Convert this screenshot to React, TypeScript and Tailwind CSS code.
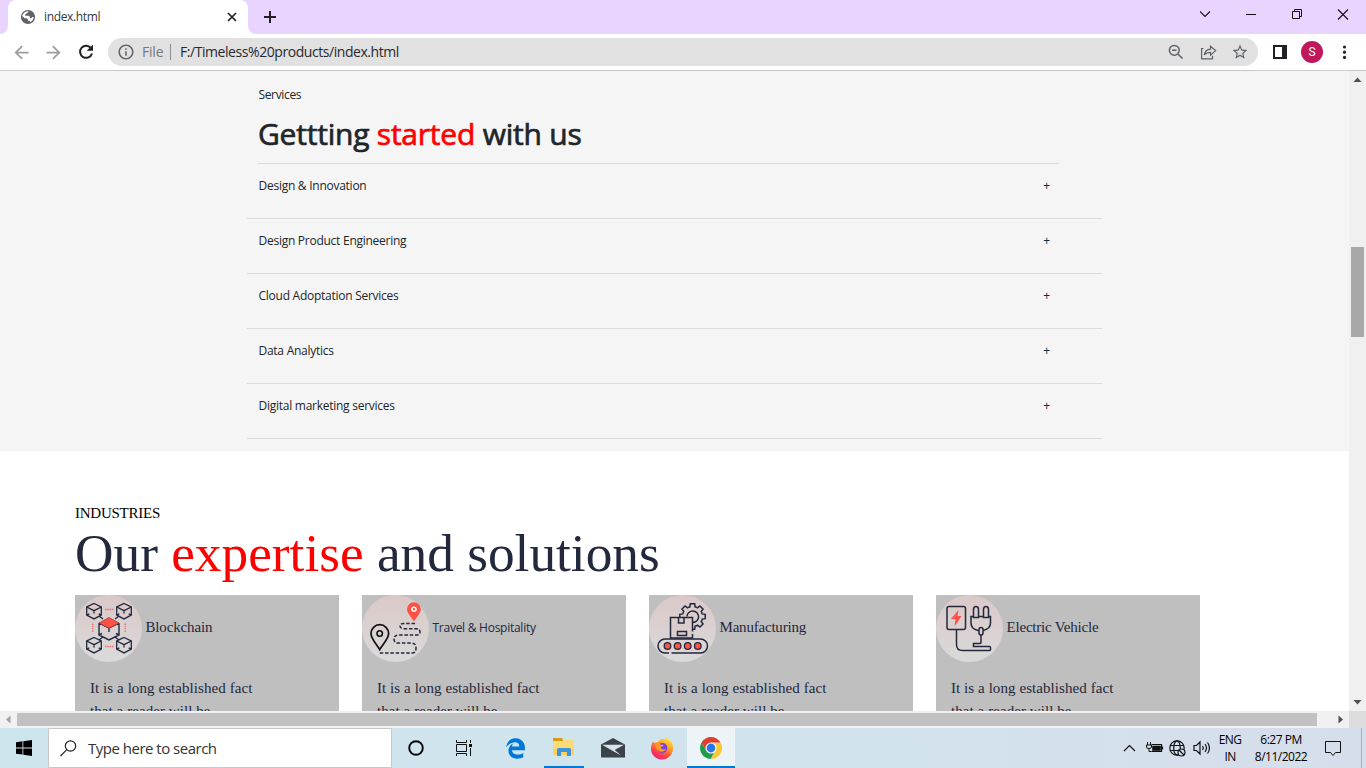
import React from "react";
import { MdArrowBack, MdArrowForward, MdInfoOutline, MdStarBorder } from "react-icons/md";
import { FaEdgeLegacy } from "react-icons/fa6";

const INK = "#23283d";
const RED = "#ff5144";

function TabStrip() {
  return (
    <div className="flex h-[34px] items-stretch bg-[#e9d3ff]">
      <div className="flex w-2 items-end bg-white">
        <div className="h-full w-full rounded-br-lg bg-[#e9d3ff]" />
      </div>
      <div className="bg-[#e9d3ff]">
        <div className="flex h-[34px] w-[240px] items-center rounded-t-lg bg-white pr-[8px] pl-[12px]">
          <svg width="16" height="16" viewBox="0 0 16 16">
            <circle cx="8" cy="8" r="7.1" fill="#5f6368" />
            <path d="M8.500 2.300C8.700 3.200 8.200 3.700 7.300 3.800 6.600 3.900 6.700 4.900 6 5.100 5.200 5.300 5 6 5.300 6.700H8.500c.7 0 1.200.5 1.200 1.200 0 .8.500 1.300 1.200 1.300.8 0 1.300-.5 1.300-1.200h1.600c-.2 2-1.300 3.900-3.100 5-.3-.7-.9-1-1.700-1-.9 0-1.300-.6-1.300-1.400 0-.8-.6-1.300-1.300-1.300H4.600L2.300 7C2.700 4.400 5.200 2.100 8.500 2.300z" fill="#fff" />
          </svg>
          <span className="ml-2 w-[177px] text-[12px] tracking-[-0.35px] text-[#35363a]">index.html</span>
          <svg className="ml-[3px]" width="16" height="16" viewBox="0 0 16 16" stroke="#202124" strokeWidth="1.7">
            <path d="M4 4l8 8M12 4l-8 8" />
          </svg>
        </div>
      </div>
      <div className="flex w-2 bg-white">
        <div className="h-full w-full rounded-bl-lg bg-[#e9d3ff]" />
      </div>
      <svg className="mt-[9px] ml-[6px]" width="16" height="16" viewBox="0 0 16 16" stroke="#202124" strokeWidth="2">
        <path d="M8 2v12M2 8h12" />
      </svg>
      <div className="ml-auto flex">
        <svg width="166" height="34" viewBox="0 0 166 34" fill="none" stroke="#111">
          <path d="M0 11.500l5 5 5-5" strokeWidth="1.1" />
          <path d="M46 14.500h10" />
          <path d="M92.500 11.500h7v7h-7zM94.500 11.500v-2h7v7h-2" />
          <path d="M138 9.500l10 10M148 9.500l-10 10" strokeWidth="1.1" />
        </svg>
      </div>
    </div>
  );
}

function Toolbar() {
  return (
    <div className="flex h-[37px] items-center border-b border-[#c9c9cb] bg-white pl-[11px]">
      <MdArrowBack size={21} color="#9b9da0" />
      <MdArrowForward size={21} color="#9b9da0" className="ml-[11px]" />
      <svg className="ml-[11px]" width="22" height="22" viewBox="0 0 22 22">
        <path d="M16.200 7.300A6.100 6.100 0 1 0 17 12.500" fill="none" stroke="#202124" strokeWidth="2" />
        <path d="M18 3.500V9.800H11.700z" fill="#202124" />
      </svg>
      <div className="ml-[11px] flex h-7 w-[1150px] items-center rounded-full bg-[#e1e1e1] pr-[9px] pl-[9px]">
        <MdInfoOutline size={18} color="#5f6368" />
        <span className="ml-[7px] w-[21px] text-[14px] leading-[20px] tracking-[-0.2px] text-[#75787c]">File</span>
        <span className="ml-[7px] h-4 w-px bg-[#8b8d90]" />
        <span className="ml-[9px] text-[14px] leading-[20px] tracking-[-0.44px] text-[#28292c]">F:/Timeless%20products/index.html</span>
        <svg className="ml-auto" width="18" height="18" viewBox="0 0 18 18" fill="none" stroke="#5f6368" strokeWidth="1.500">
          <circle cx="7.300" cy="7.300" r="4.900" /><path d="M11 11l4.500 4.500M5 7.300h4.600" />
        </svg>
        <svg className="ml-[15px]" width="18" height="18" viewBox="0 0 18 18" fill="none" stroke="#5f6368" strokeWidth="1.2">
          <path d="M3.500 5.500h-1.900v10.300h10.900v-3" />
          <path d="M4.300 12c.5-3.700 2.500-5.600 6.200-5.900V3.200l5.100 4.400-5.100 4.500V9.300c-2.900 0-4.800.8-6.200 2.700z" />
        </svg>
        <MdStarBorder size={18} color="#5f6368" className="ml-[13px]" />
      </div>
      <svg className="ml-[15px]" width="14" height="14" viewBox="0 0 14 14">
        <path d="M1 1h12v12H1z" fill="#fff" stroke="#202124" strokeWidth="2" />
        <path d="M9 0h5v14H9z" fill="#202124" />
      </svg>
      <div className="ml-[14px] flex size-[22px] items-center justify-center rounded-full bg-[#c2185b] font-['Roboto',sans-serif] text-[12px] text-white">S</div>
      <svg className="ml-[19px]" width="5" height="16" viewBox="0 0 5 16" fill="#202124">
        <circle cx="2.500" cy="3" r="1.600" /><circle cx="2.500" cy="8.200" r="1.600" /><circle cx="2.500" cy="13.400" r="1.600" />
      </svg>
    </div>
  );
}

const services = [
  "Design & Innovation",
  "Design Product Engineering",
  "Cloud Adoptation Services",
  "Data Analytics",
  "Digital marketing services",
];

function Services() {
  return (
    <section className="h-[380px] shrink-0 bg-[#f5f5f5] pt-[14px] pl-[247px] text-[#212529]">
      <div className="pl-[11px]">
        <p className="h-5 pl-[0.5px] text-[12px] leading-5 tracking-[-0.35px]">Services</p>
        <h2 className="mt-[10px] h-[38px] text-[30px] leading-[38px] font-normal tracking-[-0.22px] whitespace-nowrap [-webkit-text-stroke:0.7px]">
          Gettting <span className="text-[#ff0000]">started</span> with us
        </h2>
        <div className="mt-[10px] h-px w-[801px] bg-[#dbdbdb]" />
      </div>
      {services.map((name) => (
        <div key={name} className="flex h-[55px] w-[855px] justify-between border-b border-[#dbdbdb] pt-3 pr-[52px] pl-[11.500px] leading-5">
          <span className="text-[12px] tracking-[-0.26px]">{name}</span>
          <span className="text-[12px] text-[#0b2f4a]">+</span>
        </div>
      ))}
    </section>
  );
}

function Cube({ x, y }: { x: number; y: number }) {
  return (
    <g transform={`translate(${x} ${y})`} fill="none" stroke={INK} strokeWidth="1.3">
      <path d="M0-7.500L7.300-4V4.200L0 7.900-7.300 4.200V-4zM-7.300-4L0-.3 7.300-4M0-.3V2.500M-7.300 4.200l2.600-1.300M7.300 4.200L4.700 2.900" />
    </g>
  );
}

function BlockchainIcon() {
  return (
    <svg width="67" height="67" viewBox="0 0 67 67">
      <path d="M24 21l4 3M44 21l-4 3M24 45l4-3M44 45l-4-3" stroke={INK} strokeWidth="1.3" />
      <Cube x={19} y={16} /><Cube x={49} y={16} /><Cube x={19} y={50} /><Cube x={49} y={50} />
      <path d="M24 28v12l10 5 10-5V28M24 28l10 5 10-5M34 33v4M24 40l3-1.500M44 40l-3-1.500" fill="none" stroke={INK} strokeWidth="1.400" />
      <path d="M34 22.500L44 28l-10 5.200L24 28z" fill={RED} stroke="#a33b40" strokeWidth=".8" />
      <path d="M30 14.500h9M30 51.500h9M17.700 28.500v9M50.200 28.500v9" stroke={RED} strokeWidth="1.300" strokeDasharray="1.500 .8" opacity=".75" />
    </svg>
  );
}

function TravelIcon() {
  return (
    <svg width="67" height="67" viewBox="0 0 67 67" fill="none">
      <path d="M52 26.500c-2.300-3.700-7-8.700-7-12.300a6.900 6.900 0 0 1 13.800 0c0 3.600-4.500 8.600-6.800 12.300z" fill={RED} />
      <circle cx="52" cy="14.300" r="2" stroke="#fff" strokeWidth="1.500" />
      <path d="M17.700 54.500c-3-5.300-8.700-10.500-8.700-16a8.800 8.800 0 0 1 17.600 0c0 5.500-6 10.700-8.900 16z" stroke="#111" strokeWidth="1.700" />
      <circle cx="17.700" cy="38.500" r="2.700" stroke="#111" strokeWidth="1.600" />
      <path d="M53 28.500H42q-4 0-4 2.600t4 2.600h12q4 0 4 3.200t-4 3.200H36q-4 0-4 4t4 4h14q4 0 4 5t-4 4.800H16" stroke={INK} strokeWidth="1.500" strokeDasharray="3.500 1.800" />
    </svg>
  );
}

const gearTeeth = [0, 45, 90, 135, 180, 225, 270, 315];

function ManufacturingIcon() {
  return (
    <svg width="67" height="67" viewBox="0 0 67 67" fill="none" stroke={INK} strokeWidth="1.500">
      <g transform="translate(43.500 21.500)">
        {gearTeeth.map((a) => (
          <path key={a} d="M-4-9.300L-2.600-9.700-2.200-12.700H2.200L2.600-9.700 4-9.300" transform={`rotate(${a})`} />
        ))}
        <path d="M-5.500 0a5.800 5.800 0 1 1 5.800 6" />
      </g>
      <path d="M21.500 43V22.500h22V43z" fill="#dccdcd" />
      <path d="M29.500 22.500v5.500h5.500v-5.500M28.500 36.500h9v4h-9z" />
      <rect x="9" y="44" width="49.500" height="14" rx="7" fill="#dbd5d5" />
      <path d="M43.500 36.500v2.500" stroke="#dbd0d0" strokeWidth="2.500" />
      <path d="M20 58h2.500" stroke="#dbd8d8" strokeWidth="2" />
      <g fill={RED} strokeWidth="1.300">
        <circle cx="18.500" cy="51" r="3.300" /><circle cx="28.600" cy="51" r="3.300" /><circle cx="38.700" cy="51" r="3.300" /><circle cx="48.800" cy="51" r="3.300" />
      </g>
    </svg>
  );
}

function VehicleIcon() {
  return (
    <svg width="67" height="67" viewBox="0 0 67 67" fill="none" stroke={INK} strokeWidth="1.500">
      <rect x="11" y="11.500" width="18.500" height="23" rx="2" />
      <path d="M22.500 15l-7.500 9h4.500l-1 7.500 7-10.500h-4z" fill={RED} stroke="none" />
      <path d="M20.500 35v14.500q0 6 6 6h27q1 0 1-1v-2q0-1-1-1H37.500v-3h6.500q1 0 1-1V40" />
      <path d="M37.500 21.500h-2.500v6.500q0 6 7 7.500h5q7.500-1.500 7.500-7.500v-6.500h-2.500M37.500 22.500v-8q0-3 2.500-3t2.500 3v8zM47.500 22.500v-8q0-3 2.500-3t2.500 3v8zM42.500 21.500h5" />
      <rect x="43" y="32.500" width="4" height="7.500" rx="2" fill="#dbd1d1" />
    </svg>
  );
}

const cards = [
  { title: "Blockchain", Icon: BlockchainIcon, cls: "text-[15px] tracking-[-0.15px]" },
  { title: "Travel & Hospitality", Icon: TravelIcon, cls: "font-['Open_Sans',sans-serif] text-[12px] tracking-[-0.26px]" },
  { title: "Manufacturing", Icon: ManufacturingIcon, cls: "text-[15px] tracking-[-0.2px]" },
  { title: "Electric Vehicle", Icon: VehicleIcon, cls: "text-[15px] tracking-[-0.2px]" },
];

function Industries() {
  return (
    <section className="flex-1 bg-white pt-[52px] pl-[75px] font-['Liberation_Serif',serif] text-[#23283d]">
      <p className="h-5 text-[15px] leading-5 tracking-[-0.25px] text-black">INDUSTRIES</p>
      <h2 className="h-[72px] text-[53.300px] leading-[61px] whitespace-nowrap">
        Our <span className="text-[#ff0000]">expertise</span> and solutions
      </h2>
      <div className="flex gap-[23px]">
        {cards.map(({ title, Icon, cls }) => (
          <article key={title} className="h-[180px] w-[264px] shrink-0 bg-[#bfbfbf]">
            <div className="flex h-[67px] items-center">
              <div className="size-[67px] rounded-full bg-linear-to-b from-[#dbc8c8] to-[#dadada]">
                <Icon />
              </div>
              <h3 className={`ml-[3.500px] pb-[2px] ${cls}`}>{title}</h3>
            </div>
            <p className="mt-[15px] ml-[15px] text-[15px] leading-[23px] tracking-[0.07px] whitespace-nowrap">
              It is a long established fact<br />that a reader will be
            </p>
          </article>
        ))}
      </div>
    </section>
  );
}

function VerticalScrollbar() {
  return (
    <div className="flex h-[640px] w-[17px] flex-col items-center bg-[#f0f0f0]">
      <svg width="17" height="17"><path d="M4.500 11l4-4.500 4 4.500z" fill="#505050" /></svg>
      <div className="mt-[159px] mb-auto h-[90px] w-[13px] bg-[#a8a8a8]" />
      <svg width="17" height="17"><path d="M4.500 6l4 4.500 4-4.500z" fill="#505050" /></svg>
    </div>
  );
}

function HorizontalScrollbar() {
  return (
    <div className="flex h-[17px] items-center bg-[#f1f1f1]">
      <svg width="17" height="17"><path d="M10.500 4.500l-4.500 4 4.500 4z" fill="#a3a3a3" /></svg>
      <div className="h-[13px] w-[1300px] bg-[#c1c1c1]" />
      <svg className="ml-[15px]" width="17" height="17"><path d="M6.500 4.500l4.500 4-4.500 4z" fill="#505050" /></svg>
      <div className="h-full flex-1 bg-[#dcdcdc]" />
    </div>
  );
}

function FolderIcon() {
  return (
    <svg width="22" height="20" viewBox="0 0 22 20">
      <path d="M0 1h9l1 2v1H0z" fill="#d69b16" />
      <path d="M0 4h9.500L11 2.500H21V18H0z" fill="#ffdb78" />
      <path d="M0 12h21v6H0z" fill="#ffd05c" />
      <path d="M4 19v-6.500q0-1.500 1.500-1.500h11q1.500 0 1.500 1.500V19h-4v-4H8v4z" fill="#3a96e0" />
    </svg>
  );
}

function MailIcon() {
  return (
    <svg width="24" height="20" viewBox="0 0 24 20">
      <path d="M0 6.500L12 0l12 6.500V19.500H0z" fill="#3b4349" />
      <path d="M1 6.800h22l-9.300 5.200 6.300 5.500-9-5z" fill="#d3e4ec" />
    </svg>
  );
}

function FirefoxIcon() {
  return (
    <svg width="24" height="24" viewBox="0 0 24 24">
      <defs>
        <linearGradient id="fox" x1=".8" y1="0" x2=".25" y2="1">
          <stop offset="0" stopColor="#fff04a" /><stop offset=".4" stopColor="#ff9b22" /><stop offset=".75" stopColor="#ff3d4b" /><stop offset="1" stopColor="#e81e87" />
        </linearGradient>
      </defs>
      <path d="M3 5.500l1.700 1.700c1-.9 2.200-1.300 3.300-1.200C9 4.500 10.500 3.300 12 3c2-.2 3.300.3 4.300 1.400C15.700 3 15 2 15.500.5c2 1.500 3.400 3.500 4.200 5l.8-1.200c1.800 2.400 2.800 5.300 2.500 8.700C22.500 19 17.800 23.500 12 23.500S1 19 1 13C1 10 1.700 7.500 3 5.500z" fill="url(#fox)" />
      <circle cx="12.300" cy="12" r="5" fill="#7542e5" />
      <path d="M6 7.500c2-.5 3.500 0 4.500 1.300h3.300c-.2 1.500-2.300 2-3 2.500.5 2.500 3.200 2.700 5.500 1.500-1.500 3.500-6.500 4.300-9.300.7C5.300 11.500 5.500 9.500 6 7.500z" fill="#ff9629" />
    </svg>
  );
}

function ChromeIcon() {
  return (
    <svg width="22" height="22" viewBox="0 0 22 22">
      <path d="M11 5.500h9.500A11 11 0 0 1 10.500 22l5.200-8.500z" fill="#fcc934" />
      <path d="M1.500 5.500A11 11 0 0 0 10.500 22l4.800-8.500L6.300 13.700z" fill="#229c4b" />
      <path d="M1.500 5.500A11 11 0 0 1 20.500 5.500H11L6.300 13.700z" fill="#e33b2e" />
      <circle cx="11" cy="11" r="5.500" fill="#fff" /><circle cx="11" cy="11" r="4.400" fill="#2877e8" />
    </svg>
  );
}

function Taskbar() {
  return (
    <div className="flex h-10 bg-linear-to-r from-[#cde5ed] via-[#d1e4ee] to-[#d6deeb]">
      <div className="flex w-12 items-center justify-center">
        <svg width="16" height="16" viewBox="0 0 16 16" fill="#000">
          <path d="M0 2.300L6.500 1.300V7.500H0zM7.300 1.200L16 0v7.500H7.300zM0 8.400h6.500v6.200L0 13.700zM7.300 8.400H16V16l-8.700-1.200z" />
        </svg>
      </div>
      <div className="flex w-[344px] items-center border border-[#c6c8ca] bg-white pl-[11px]">
        <svg width="17" height="17" viewBox="0 0 17 17" fill="none" stroke="#222" strokeWidth="1.200">
          <circle cx="10.500" cy="6" r="5.200" /><path d="M6.800 9.700L.5 16" />
        </svg>
        <span className="ml-[11px] text-[15px] tracking-[-0.5px] text-[#333]">Type here to search</span>
      </div>
      <div className="flex w-12 items-center justify-center">
        <svg width="16" height="16" viewBox="0 0 16 16"><circle cx="8" cy="8" r="6.800" fill="none" stroke="#080808" strokeWidth="1.900" /></svg>
      </div>
      <div className="flex w-12 items-center justify-center">
        <svg width="16" height="16" viewBox="0 0 16 16" fill="none" stroke="#111">
          <path d="M.5 0v2.500h10V0M.5 16v-2.500h10V16M.5 4.500h10v7H.5zM14.500 0v3M14.500 8v8" />
          <path d="M13 4h3v3h-3z" fill="#111" stroke="none" />
        </svg>
      </div>
      <div className="flex w-[54px] items-center justify-center"><FaEdgeLegacy size={21} color="#0078d7" /></div>
      <div className="flex w-[44px] pl-[2px]">
        <div className="flex w-10 items-center justify-center border-b-2 border-[#0078d7]"><FolderIcon /></div>
      </div>
      <div className="flex w-[54px] items-center justify-center"><MailIcon /></div>
      <div className="flex w-[44px] items-center justify-center"><FirefoxIcon /></div>
      <div className="ml-[3px] flex w-12 items-center justify-center border-b-2 border-[#0078d7] bg-[#edf4f8] pt-[2px]"><ChromeIcon /></div>
      <div className="ml-auto flex items-center">
        <svg width="94" height="24" viewBox="0 0 94 24" fill="none" stroke="#111" strokeWidth="1.200">
          <path d="M6 15l5.500-5.500L17 15" />
          <path d="M33.500 8.500h10v7h-10M44.500 10.500v3" /><path d="M34.500 10h8v4.500h-8z" fill="#111" strokeWidth=".6" />
          <path d="M29.500 6v3M32.500 6v3M28.500 9h5v2q0 1.500-2.500 1.500T28.500 11zM31 12.500v3h2.500" strokeWidth="1" />
          <circle cx="59" cy="12" r="7.200" /><ellipse cx="59" cy="12" rx="3.300" ry="7.200" /><path d="M52 9.500h14M52 14.500h14" />
          <circle cx="63.500" cy="16.500" r="3.500" fill="#d5dfec" /><path d="M61 14l5 5" />
          <path d="M76 9.500h2.500L82 6v12l-3.500-3.500H76zM84.500 10q1.500 2 0 4M87 8q3 4 0 8M89.500 6.500q4 5.500 0 11" />
        </svg>
        <div className="ml-[4px] w-[28px] text-center text-[12px] leading-[17px] tracking-[-0.6px] text-black">ENG<br />IN</div>
        <div className="ml-[5px] w-[64px] text-center text-[12px] leading-[17px] tracking-[-0.5px] whitespace-nowrap text-black">6:27 PM<br />8/11/2022</div>
        <svg className="ml-[11px]" width="18" height="18" viewBox="0 0 18 18" fill="none" stroke="#111">
          <path d="M1.500 2.500h15v11h-5l-2.500 3-2.500-3h-5z" />
        </svg>
        <div className="mr-1 ml-[19px] h-10 w-px bg-[#a9b0bb]" />
      </div>
    </div>
  );
}

export default function App() {
  return (
    <div className="flex h-[768px] w-[1366px] flex-col overflow-hidden font-['Open_Sans',sans-serif]">
      <TabStrip />
      <Toolbar />
      <div className="flex h-[640px] overflow-hidden">
        <main className="flex h-[640px] flex-1 flex-col overflow-hidden">
          <Services />
          <Industries />
        </main>
        <VerticalScrollbar />
      </div>
      <HorizontalScrollbar />
      <Taskbar />
    </div>
  );
}
